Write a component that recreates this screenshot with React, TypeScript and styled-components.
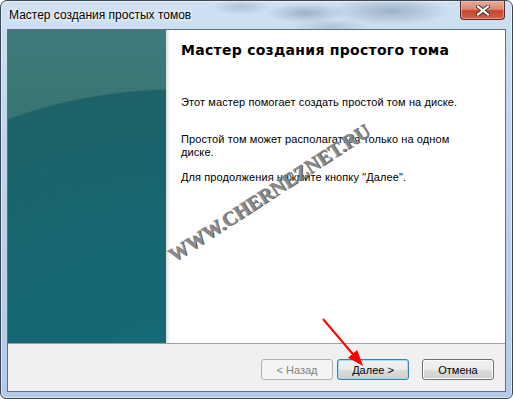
import React from "react";
import styled, { createGlobalStyle } from "styled-components";

const GlobalStyle = createGlobalStyle`
html, body {
    margin: 0;
    padding: 0;
    background: #ffffff;
}
body {
    font-family: "Liberation Sans", Arial, sans-serif;
}
`;

const Window = styled.div`
position: relative;
box-sizing: border-box;
width: 513px;
height: 399px;
border: 1px solid #3a4756;
border-radius: 7px 7px 6px 6px;
padding: 0 6px 6px 6px;
display: flex;
flex-direction: column;
overflow: hidden;
background:
    radial-gradient(ellipse 40px 10px at 305px 12px, rgba(70, 92, 118, 0.35), transparent),
    radial-gradient(ellipse 60px 14px at 390px 10px, rgba(70, 92, 118, 0.35), transparent),
    radial-gradient(ellipse 30px 8px at 240px 6px, rgba(90, 110, 135, 0.25), transparent),
    radial-gradient(ellipse 40px 8px at 330px 26px, rgba(90, 110, 135, 0.25), transparent),
    linear-gradient(to bottom, #cfe0f2 0%, #c2d7ee 30%, #b9cfe8 70%, #b3cae6 100%);
box-shadow: inset 0 0 0 1px rgba(255, 255, 255, 0.55);
`;

const TitleBar = styled.div`
height: 28px;
display: flex;
justify-content: space-between;
align-items: flex-start;
flex-shrink: 0;
`;

const Title = styled.span`
padding: 7px 0 0 2px;
font-size: 12px;
line-height: 15px;
color: #000000;
text-shadow: 0 0 6px #ffffff, 0 0 3px #ffffff;
`;

const CloseButton = styled.div`
box-sizing: border-box;
width: 45px;
height: 19px;
margin-right: 1px;
display: flex;
align-items: center;
justify-content: center;
border: 1px solid #5b2a22;
border-top: none;
border-radius: 0 0 4px 4px;
background: linear-gradient(to bottom, #e9a99a 0%, #dc8a76 45%, #c7452c 55%, #d0644a 100%);
box-shadow: inset 0 0 0 1px rgba(255, 200, 190, 0.5);
`;

const Client = styled.div`
flex: 1;
display: flex;
flex-direction: column;
border: 1px solid #5f6f80;
background: #f0f0f0;
min-height: 0;
`;

const Body = styled.div`
display: flex;
height: 313px;
border-bottom: 1px solid #a0a0a0;
`;

const SidePanel = styled.div`
width: 158px;
flex-shrink: 0;
background:
    radial-gradient(ellipse 400px 315px at 170px 373px, #126b77 0%, #166772 55%, #1d6267 99.3%, transparent 99.8%),
    repeating-linear-gradient(to bottom, rgba(255, 255, 255, 0.02) 0px, rgba(255, 255, 255, 0.02) 1px, transparent 1px, transparent 3px),
    linear-gradient(to bottom, #3e7a79 0%, #33716f 40%, #2b6c6c 100%);
`;

const Content = styled.div`
flex: 1;
padding: 12px 0 0 15px;
background: linear-gradient(to right, #dedede 0px, #f4f4f4 3px, #ffffff 4px);
`;

const Heading = styled.h1`
margin: 0;
font-family: "DejaVu Sans", Verdana, sans-serif;
font-weight: bold;
font-size: 14px;
line-height: 17px;
letter-spacing: 0.28px;
color: #000000;
`;

const Para = styled.p<{ $gap: number }>`
margin: ${(p) => p.$gap}px 0 0 0;
width: 292px;
font-size: 11px;
line-height: 13px;
letter-spacing: 0.1px;
color: #000000;
`;

const Footer = styled.div`
flex: 1;
display: flex;
justify-content: flex-end;
align-items: flex-start;
padding: 15px 11px 0 0;
`;

const Button = styled.div<{ $kind?: "default" | "disabled"; $gap?: number }>`
box-sizing: border-box;
width: 72px;
height: 21px;
margin-left: ${(p) => p.$gap || 0}px;
display: flex;
align-items: center;
justify-content: center;
font-size: 11px;
border-radius: 3px;
border: 1px solid ${(p) => (p.$kind === "default" ? "#3c7fb1" : p.$kind === "disabled" ? "#adb2b5" : "#707070")};
color: ${(p) => (p.$kind === "disabled" ? "#838383" : "#000000")};
background: ${(p) =>
    p.$kind === "disabled"
        ? "#f4f4f4"
        : "linear-gradient(to bottom, #f2f2f2 0%, #ebebeb 50%, #dddddd 51%, #cfcfcf 100%)"};
box-shadow: inset 0 0 0 1px ${(p) => (p.$kind === "default" ? "#9fdcf6" : p.$kind === "disabled" ? "#f4f4f4" : "#fcfcfc")};
`;

const Watermark = styled.div`
position: absolute;
left: 268px;
top: 192px;
transform: translate(-50%, -50%) rotate(-33deg);
font-family: "Liberation Serif", "Times New Roman", serif;
font-weight: bold;
font-size: 20px;
white-space: nowrap;
color: #8a8a8a;
text-shadow: 1px 1px 0 #5e5e5e;
pointer-events: none;
`;

const ArrowLayer = styled.svg`
position: absolute;
left: 316px;
top: 312px;
pointer-events: none;
`;

export default function App() {
    return (
        <>
            <GlobalStyle />
            <Window>
                <TitleBar>
                    <Title>Мастер создания простых томов</Title>
                    <CloseButton>
                        <svg width="14" height="11" viewBox="0 0 14 11">
                            <path d="M2 1.5 L12 9.5 M12 1.5 L2 9.5" stroke="#3a2a28" strokeWidth="4" strokeLinecap="square" />
                            <path d="M2 1.5 L12 9.5 M12 1.5 L2 9.5" stroke="#ffffff" strokeWidth="2.2" strokeLinecap="square" />
                        </svg>
                    </CloseButton>
                </TitleBar>
                <Client>
                    <Body>
                        <SidePanel />
                        <Content>
                            <Heading>Мастер создания простого тома</Heading>
                            <Para $gap={37}>Этот мастер помогает создать простой том на диске.</Para>
                            <Para $gap={24}>Простой том может располагаться только на одном диске.</Para>
                            <Para $gap={12}>Для продолжения нажмите кнопку "Далее".</Para>
                        </Content>
                    </Body>
                    <Footer>
                        <Button $kind="disabled">&lt; Назад</Button>
                        <Button $kind="default" $gap={4}>Далее &gt;</Button>
                        <Button $gap={13}>Отмена</Button>
                    </Footer>
                </Client>
                <Watermark>WWW.CHERNEZNET.RU</Watermark>
                <ArrowLayer width="52" height="58" viewBox="0 0 52 58">
                    <line x1="6" y1="6" x2="37" y2="42.5" stroke="#ff0000" strokeWidth="2" />
                    <polygon points="46,53 31,44.7 40.2,36.9" fill="#ff0000" />
                </ArrowLayer>
            </Window>
        </>
    );
}
